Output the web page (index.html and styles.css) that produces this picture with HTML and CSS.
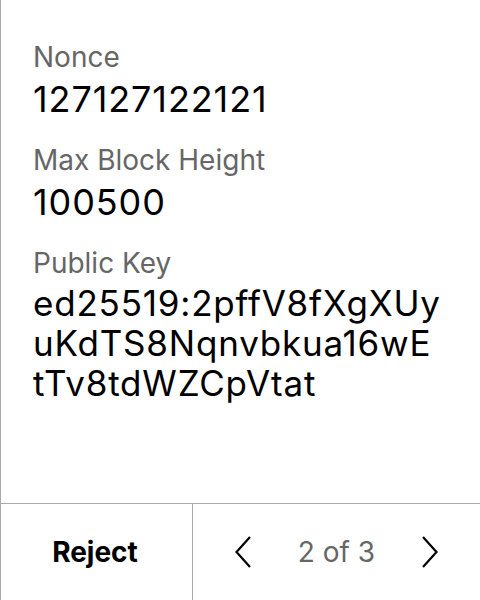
FILE: index.html
```html
<!DOCTYPE html>
<html>
<head>
<meta charset="utf-8">
<link rel="stylesheet" href="styles.css">
</head>
<body>
<div class="screen">
  <div class="content">
    <div class="field">
      <div class="label">Nonce</div>
      <div class="value">127127122121</div>
    </div>
    <div class="field">
      <div class="label">Max Block Height</div>
      <div class="value">100500</div>
    </div>
    <div class="field">
      <div class="label">Public Key</div>
      <div class="value key">ed25519:2pffV8fXgXUy<br>uKdTS8Nqnvbkua16wE<br>tTv8tdWZCpVtat</div>
    </div>
  </div>
  <div class="footer">
    <div class="reject">Reject</div>
    <div class="pager">
      <svg class="chev" width="16" height="32" viewBox="0 0 16 32"><path d="M15 1 L1.5 16 L15 31" fill="none" stroke="#000" stroke-width="2.2"/></svg>
      <span class="count">2 of 3</span>
      <svg class="chev" width="16" height="32" viewBox="0 0 16 32"><path d="M1 1 L14.5 16 L1 31" fill="none" stroke="#000" stroke-width="2.2"/></svg>
    </div>
  </div>
</div>
</body>
</html>
```
FILE: styles.css
```css
html, body {
  margin: 0;
  padding: 0;
  background: #fff;
}
.screen {
  width: 480px;
  height: 600px;
  box-sizing: border-box;
  border-left: 1px solid #aaa;
  display: flex;
  flex-direction: column;
  font-family: Inter, "Noto Sans", sans-serif;
}
.content {
  flex: 1;
  padding: 39px 0 0 32px;
  display: flex;
  flex-direction: column;
  gap: 19px;
}
.label {
  font-size: 28px;
  line-height: 36px;
  color: #666;
}
.value {
  font-size: 36px;
  line-height: 48px;
  letter-spacing: 0.9px;
  color: #000;
}
.key {
  font-size: 35px;
  line-height: 40px;
  letter-spacing: 0.8px;
  padding-top: 2px;
}
.footer {
  height: 96px;
  border-top: 1px solid #aaa;
  display: flex;
}
.reject {
  width: 192px;
  flex: none;
  border-right: 1px solid #aaa;
  display: flex;
  align-items: center;
  justify-content: center;
  padding-right: 3px;
  box-sizing: border-box;
  font-size: 28px;
  font-weight: 700;
  color: #000;
}
.pager {
  flex: 1;
  display: flex;
  align-items: center;
  justify-content: space-between;
  padding: 0 42px;
}
.count {
  font-size: 28px;
  color: #666;
}
```
